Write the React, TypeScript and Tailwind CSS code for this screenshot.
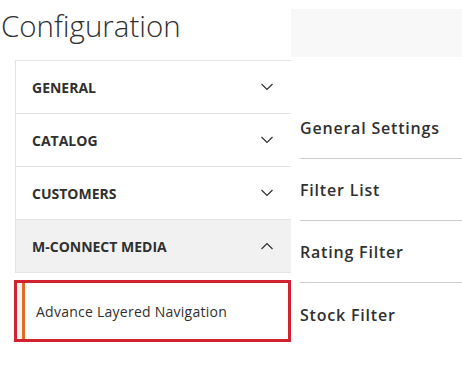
import React from "react";

const Chevron = ({ up }: { up?: boolean }) => (
  <svg width="14" height="8" viewBox="0 0 14 8" className="block">
    <path
      d={up ? "M1.5 7 L7 1.5 L12.5 7" : "M1.5 1 L7 6.5 L12.5 1"}
      fill="none"
      stroke="#303030"
      strokeWidth="1.2"
    />
  </svg>
);

const Row = ({ label, open }: { label: string; open?: boolean }) => (
  <div
    className={`flex h-[53px] items-center justify-between border-b border-[#e3e3e3] pl-[16px] pr-[16px] ${
      open ? "bg-[#f1f1f1]" : "bg-white"
    }`}
  >
    <span className="text-[14px] font-bold uppercase text-[#303030]">{label}</span>
    <span className="mr-[1px]">
      <Chevron up={open} />
    </span>
  </div>
);

const Item = ({ label, last }: { label: string; last?: boolean }) => (
  <div
    className={`flex h-[62px] items-center ${last ? "" : "border-b border-[#cccccc]"}`}
  >
    <span className="pt-[1px] text-[16px] font-semibold tracking-[0.8px] text-[#303030]">{label}</span>
  </div>
);

export default function App() {
  return (
    <div
      className="flex h-[366px] w-[462px] overflow-hidden bg-white"
      style={{ fontFamily: '"Open Sans", "Liberation Sans", sans-serif' }}
    >
      <div className="flex w-[291px] shrink-0 flex-col">
        <div className="h-[60px] pl-[1px] pt-[6px]">
          <h1 className="text-[29.5px] font-light leading-[40px] text-[#303030]">Configuration</h1>
        </div>
        <div className="ml-[15px] border-l border-t border-[#e3e3e3]">
          <Row label="General" />
          <Row label="Catalog" />
          <Row label="Customers" />
          <Row label="M-Connect Media" open />
        </div>
        <div className="ml-[14px] mt-[7px] flex h-[62px] border-[3px] border-[#d0232f] bg-white">
          <div className="w-[5px] bg-[#f4f4f4]" />
          <div className="w-[3px] bg-[#e26a21]" />
          <div className="flex flex-1 items-center pl-[11px]">
            <span className="text-[14px] tracking-[0.25px] text-[#303030]">Advance Layered Navigation</span>
          </div>
        </div>
      </div>
      <div className="flex flex-1 flex-col">
        <div className="mt-[9px] h-[48px] bg-[#f8f8f8]" />
        <div className="ml-[9px] mt-[40px] flex flex-col">
          <Item label="General Settings" />
          <Item label="Filter List" />
          <Item label="Rating Filter" />
          <Item label="Stock Filter" last />
        </div>
      </div>
    </div>
  );
}
